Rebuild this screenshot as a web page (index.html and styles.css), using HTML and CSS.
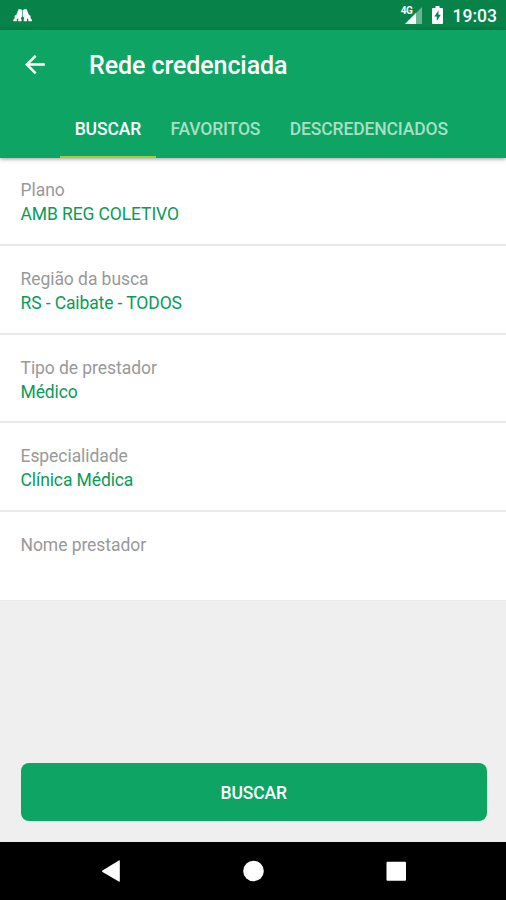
FILE: index.html
```html
<!DOCTYPE html>
<html lang="pt-BR">
<head>
<meta charset="utf-8">
<title>Rede credenciada</title>
<link rel="stylesheet" href="styles.css">
</head>
<body>
<div class="statusbar">
  <svg class="notify" width="20" height="14" viewBox="0 0 20 14"><path fill="#fff" d="M5.500.3H8l1.300 1v6L8 9l.5 1.500v1.800H5.200V9.200L3.800 10.500v1.800H.3v-1.500L1.800 9 1.500 7l2-1.500zM13.700.3h-2.500l-1.300 1v6L11.200 9l-.5 1.500v1.800H14V9.200l1.400 1.300v1.800h3.500v-1.500L17.400 9l.3-2-2-1.500z"/></svg>
  <div class="system">
    <span class="net">4G</span>
    <svg class="signal" width="17" height="17" viewBox="0 0 17 17"><path fill="#fff" fill-opacity=".4" d="M17 0v17H0z"/><path fill="#fff" d="M11 6v11H0z"/></svg>
    <svg class="battery" width="11" height="18" viewBox="0 0 11 18"><path fill="#fff" d="M3.500 0h4v2H10q1 0 1 1v14q0 1-1 1H1q-1 0-1-1V3q0-1 1-1h2.500z"/><path fill="#078249" d="M6.500 4.500v4.300h2.300L4.800 15v-4.500H2.300z"/></svg>
    <span class="clock">19:03</span>
  </div>
</div>
<header class="appbar">
  <div class="titlebar">
    <svg width="22" height="20" viewBox="0 0 22 20"><path fill="none" stroke="#fff" stroke-width="2.500" d="M20.800 9.500H3M11.700.8L2.800 9.500l8.900 8.900"/></svg>
    <h1>Rede credenciada</h1>
  </div>
  <nav class="tabs">
    <span class="tab active">BUSCAR</span>
    <span class="tab">FAVORITOS</span>
    <span class="tab">DESCREDENCIADOS</span>
  </nav>
</header>
<main>
  <div class="row"><label>Plano</label><span>AMB REG COLETIVO</span></div>
  <div class="row"><label>Região da busca</label><span>RS - Caibate - TODOS</span></div>
  <div class="row"><label>Tipo de prestador</label><span>Médico</span></div>
  <div class="row"><label>Especialidade</label><span>Clínica Médica</span></div>
  <div class="row"><label>Nome prestador</label></div>
</main>
<div class="action"><button>BUSCAR</button></div>
<footer class="navbar">
  <svg width="506" height="58" viewBox="0 0 506 58"><g fill="#fff"><path d="M119.800 19v20q0 1-1 .5l-16.300-9.500q-1-.8 0-1.500l16.300-10q1-.5 1 .5z"/><circle cx="253.500" cy="29" r="10.300"/><rect x="386.500" y="19.800" width="19.500" height="19" rx="1"/></g></svg>
</footer>
</body>
</html>
```
FILE: styles.css
```css
* { box-sizing: border-box; }
body {
  margin: 0;
  height: 900px;
  display: flex;
  flex-direction: column;
  overflow: hidden;
  background: #efefef;
  font-family: Roboto, sans-serif;
}
svg { display: block; flex: none; }
.statusbar {
  height: 30px;
  flex: none;
  display: flex;
  justify-content: space-between;
  align-items: flex-start;
  padding: 0 9px 0 13px;
  background: #078249;
  color: #fff;
}
.notify { margin-top: 9px; }
.system { display: flex; }
.net { font-size: 10px; font-weight: 700; line-height: 10px; margin: 6px -8px 0 0; letter-spacing: -.3px; }
.signal { margin: 7px 10px 0 0; }
.battery { margin: 6px 10px 0 0; }
.clock { font-size: 17.500px; font-weight: 500; line-height: 20px; margin-top: 6px; }
.appbar {
  height: 127.500px;
  flex: none;
  position: relative;
  background: #0ea564;
  color: #fff;
  box-shadow: 0 1px 4px rgba(0, 0, 0, .4);
}
.titlebar { height: 70px; display: flex; align-items: center; padding-left: 23.500px; }
h1 { margin: 2px 0 0 43.500px; font-size: 25px; letter-spacing: -.08px; line-height: 30px; font-weight: 500; }
.tabs { height: 57.500px; display: flex; padding-left: 60px; }
.tab {
  padding: 18px 14.700px 0;
  font-size: 17.500px;
  letter-spacing: -.13px;
  line-height: 22px;
  font-weight: 500;
  color: #a8dfc4;
}
.active { color: #fff; border-bottom: 2.500px solid #a0cd3d; }
.row {
  height: 88.600px;
  padding: 21px 20.500px 0;
  background: #fff;
  border-bottom: 2px solid #e9e9e9;
  font-size: 17.500px;
  letter-spacing: -.11px;
  line-height: 24px;
}
.row:first-child { padding-top: 20.500px; }
.row:last-child { height: 89px; border-bottom-width: 1px; }
.row label, .row span { display: block; }
.row label { color: #999; letter-spacing: -.06px; }
.row span { color: #0a9b58; }
.action { margin-top: auto; padding: 0 19px 20.500px 20.500px; }
button {
  display: block;
  width: 100%;
  height: 58px;
  border: 0;
  border-radius: 8px;
  background: #0ea564;
  color: #fff;
  font: 500 17.500px/22px Roboto, sans-serif;
  letter-spacing: -.1px;
  padding-top: 2px;
}
.navbar { height: 58.500px; flex: none; background: #000; }
```
